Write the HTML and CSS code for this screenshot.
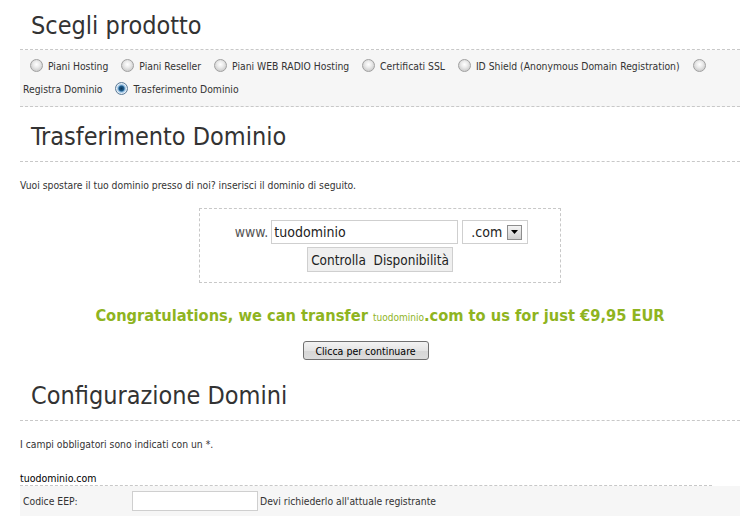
FILE: index.html
```html
<!DOCTYPE html>
<html lang="it">
<head>
<meta charset="utf-8">
<title>Scegli prodotto</title>
<link rel="stylesheet" href="styles.css">
</head>
<body>
<div class="page">
  <h1 class="heading heading-first">Scegli prodotto</h1>
  <div class="products">
    <label><input type="radio" name="p" class="radio"> Piani Hosting</label>
    <label><input type="radio" name="p" class="radio"> Piani Reseller</label>
    <label><input type="radio" name="p" class="radio"> Piani WEB RADIO Hosting</label>
    <label><input type="radio" name="p" class="radio"> Certificati SSL</label>
    <label><input type="radio" name="p" class="radio"> ID Shield (Anonymous Domain Registration)</label>
    <label><input type="radio" name="p" class="radio"> Registra Dominio</label>
    <label><input type="radio" name="p" class="radio" checked> Trasferimento Dominio</label>
  </div>

  <h2 class="heading">Trasferimento Dominio</h2>
  <p class="text intro">Vuoi spostare il tuo dominio presso di noi? inserisci il dominio di seguito.</p>

  <div class="domain-box">
    <div class="domain-row">
      <span class="www">www.</span>
      <input class="domain-input" type="text" value="tuodominio">
      <div class="tld">
        <select class="tld-select"><option>.com</option></select>
        <span class="tld-arrow"><svg width="7" height="4" viewBox="0 0 7 4"><path d="M0 0H7L3.5 4Z" fill="#000"/></svg></span>
      </div>
    </div>
    <button class="check-btn" type="button">Controlla&nbsp; Disponibilità</button>
  </div>

  <p class="congrats">Congratulations, we can transfer <span class="small-domain">tuodominio</span>.com to us for just €9,95 EUR</p>

  <div class="continue">
    <button class="continue-btn" type="button">Clicca per continuare</button>
  </div>

  <h2 class="heading">Configurazione Domini</h2>
  <p class="text required">I campi obbligatori sono indicati con un *.</p>

  <div class="domain-title">tuodominio.com</div>
  <div class="config-row">
    <span class="config-label">Codice EEP:</span>
    <input class="epp-input" type="text">
    <span class="config-hint">Devi richiederlo all'attuale registrante</span>
  </div>
</div>
</body>
</html>
```

FILE: styles.css
```css
html, body {
  margin: 0;
  padding: 0;
  background: #fff;
}

body {
  font-family: "DejaVu Sans Condensed", "DejaVu Sans", sans-serif;
  color: #333;
}

.page {
  padding: 0 7px 0 20px;
}

.heading {
  margin: 10px 0 0;
  padding: 0 0 4px 11px;
  font-family: "DejaVu Sans Condensed", "DejaVu Sans", sans-serif;
  font-weight: normal;
  font-size: 25px;
  line-height: 40px;
  color: #333;
  border-bottom: 1px dashed #c8c8c8;
}

.heading-first {
  margin-top: 6px;
  padding-bottom: 3px;
}

.products {
  background: #f6f6f6;
  border-bottom: 1px dashed #c8c8c8;
  padding: 5px 0 5px 3px;
  font-size: 10.3px;
  line-height: 23px;
  color: #333;
}

.products label {
  margin-right: 3px;
}

.radio {
  appearance: none;
  -webkit-appearance: none;
  width: 13px;
  height: 13px;
  margin: 0 2px 0 7px;
  border-radius: 50%;
  border: 1px solid #a0a0a0;
  background: radial-gradient(circle at 50% 40%, #ffffff 0, #ececec 3px, #d2d2d2 6px);
  vertical-align: -2px;
  box-sizing: border-box;
}

.radio:checked {
  border-color: #5a7a98;
  background: radial-gradient(circle at 50% 50%, #0b3558 0, #1d5c8c 2.5px, #8dbbe0 3.5px, #e4edf5 5px, #cfd6dc 6px);
}

.text {
  font-size: 10.3px;
  line-height: 14px;
  color: #333;
}

.intro {
  margin: 16px 0;
}

.domain-box {
  width: 360px;
  margin: 0 auto;
  border: 1px dashed #c8c8c8;
  padding: 11px 0 10px;
  display: flex;
  flex-direction: column;
  align-items: center;
  gap: 3px;
}

.domain-row {
  display: flex;
  align-items: center;
  gap: 3px;
  padding-left: 3px;
}

.www {
  font-size: 14px;
  color: #555;
}

.domain-input {
  width: 187px;
  height: 24px;
  box-sizing: border-box;
  border: 1px solid #cfcfcf;
  padding: 0 2px;
  font-family: inherit;
  font-size: 14px;
  color: #222;
  outline: none;
}

.tld {
  margin-left: 1px;
  width: 66px;
  height: 24px;
  box-sizing: border-box;
  border: 1px solid #cfcfcf;
  display: flex;
  align-items: center;
  background: #fff;
}

.tld-select {
  appearance: none;
  -webkit-appearance: none;
  border: none;
  background: transparent;
  font-family: inherit;
  font-size: 14px;
  color: #222;
  padding: 0 0 0 8px;
  width: 44px;
  outline: none;
}

.tld-arrow {
  width: 15px;
  height: 15px;
  box-sizing: border-box;
  border: 1px solid #8d8d8d;
  background: linear-gradient(#f4f4f4, #cfcfcf);
  display: flex;
  align-items: center;
  justify-content: center;
}

.check-btn {
  width: 146px;
  height: 25px;
  border: 1px solid #cfcfcf;
  background: #efefef;
  font-family: inherit;
  font-size: 13.5px;
  color: #222;
  padding: 0;
}

.congrats {
  margin: 22px 0 0;
  text-align: center;
  font-weight: bold;
  font-size: 16.3px;
  line-height: 22px;
  color: #8fb41f;
}

.small-domain {
  font-weight: normal;
  font-size: 10px;
}

.continue {
  display: flex;
  justify-content: center;
  padding-right: 29px;
  margin: 12px 0 16px;
}

.continue-btn {
  width: 126px;
  height: 19px;
  border: 1px solid #707070;
  border-radius: 3px;
  background: linear-gradient(#f3f3f3, #e4e4e4 50%, #d6d6d6 51%, #dcdcdc);
  font-family: inherit;
  font-size: 10.5px;
  color: #000;
  padding: 0;
}

.required {
  margin: 16px 0 0;
}

.domain-title {
  margin-top: 20px;
  width: 692px;
  font-size: 10.5px;
  line-height: 14px;
  color: #000;
  border-bottom: 1px dashed #c8c8c8;
  padding-bottom: 0;
}

.config-row {
  background: #f6f6f6;
  display: flex;
  align-items: center;
  height: 30px;
  padding-left: 3px;
  font-size: 10.3px;
  color: #333;
}

.config-label {
  width: 109px;
}

.epp-input {
  width: 126px;
  height: 20px;
  box-sizing: border-box;
  border: 1px solid #cfcfcf;
  margin-right: 2px;
}
```
